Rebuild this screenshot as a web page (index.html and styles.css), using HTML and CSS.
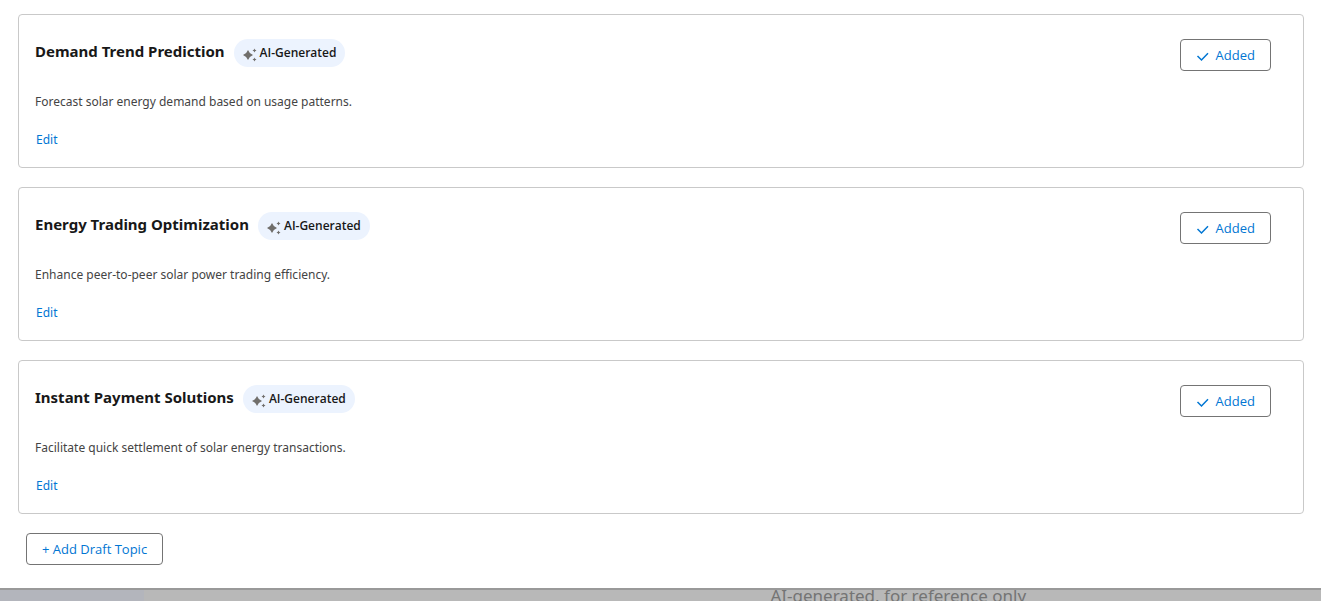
FILE: index.html
```html
<!DOCTYPE html>
<html lang="en">
<head>
    <meta charset="UTF-8">
    <meta name="viewport" content="width=device-width, initial-scale=1.0">
    <title>Draft Topics</title>
    <link rel="stylesheet" href="styles.css">
</head>
<body>
    <!-- shared icons -->
    <svg class="icon-defs" aria-hidden="true">
        <symbol id="sparkle" viewBox="0 0 14 16">
            <path d="M5 3 Q6.3 6.7 10 8 Q6.3 9.3 5 13 Q3.7 9.3 0 8 Q3.7 6.7 5 3Z"/>
            <path d="M11.5 1.5 Q11.8 3.2 13.5 3.5 Q11.8 3.8 11.5 5.5 Q11.2 3.8 9.5 3.5 Q11.2 3.2 11.5 1.5Z"/>
            <path d="M11.5 10.5 Q11.8 12.2 13.5 12.5 Q11.8 12.8 11.5 14.5 Q11.2 12.8 9.5 12.5 Q11.2 12.2 11.5 10.5Z"/>
        </symbol>
        <symbol id="check" viewBox="0 0 14 14">
            <path d="M1.5 7 L5.5 11 L12 4.2" fill="none" stroke="currentColor" stroke-width="1.5"/>
        </symbol>
    </svg>

    <main class="panel">
        <section class="topic-card">
            <div class="topic-header">
                <h3>Demand Trend Prediction</h3>
                <span class="ai-badge"><svg class="sparkle-icon"><use href="#sparkle"/></svg>AI-Generated</span>
                <button type="button" class="btn added-btn"><svg class="check-icon"><use href="#check"/></svg>Added</button>
            </div>
            <p>Forecast solar energy demand based on usage patterns.</p>
            <a href="#" class="edit-link">Edit</a>
        </section>

        <section class="topic-card">
            <div class="topic-header">
                <h3>Energy Trading Optimization</h3>
                <span class="ai-badge"><svg class="sparkle-icon"><use href="#sparkle"/></svg>AI-Generated</span>
                <button type="button" class="btn added-btn"><svg class="check-icon"><use href="#check"/></svg>Added</button>
            </div>
            <p>Enhance peer-to-peer solar power trading efficiency.</p>
            <a href="#" class="edit-link">Edit</a>
        </section>

        <section class="topic-card">
            <div class="topic-header">
                <h3>Instant Payment Solutions</h3>
                <span class="ai-badge"><svg class="sparkle-icon"><use href="#sparkle"/></svg>AI-Generated</span>
                <button type="button" class="btn added-btn"><svg class="check-icon"><use href="#check"/></svg>Added</button>
            </div>
            <p>Facilitate quick settlement of solar energy transactions.</p>
            <a href="#" class="edit-link">Edit</a>
        </section>

        <button type="button" class="btn add-btn">+ Add Draft Topic</button>
    </main>

    <footer>AI-generated, for reference only</footer>
</body>
</html>
```
FILE: styles.css
```css
* {
    box-sizing: border-box;
}
html,
body {
    height: 100%;
}
body {
    display: flex;
    flex-direction: column;
    margin: 0;
    overflow: hidden;
    background-color: #fff;
    color: #181818;
    font-family: "Segoe UI", "Noto Sans", sans-serif;
    font-size: 12px;
    line-height: 18px;
}
.icon-defs {
    display: none;
}
.panel {
    display: flex;
    flex-direction: column;
    flex-shrink: 0;
    gap: 19px;
    padding: 14px 17px 23px 18px;
}
.topic-card {
    padding: 24px 32px 18px 16px;
    border: 1px solid #c9c9c9;
    border-radius: 4px;
}
.topic-header {
    display: flex;
    align-items: flex-start;
    gap: 9px;
}
.topic-header h3 {
    margin: 0;
    font-size: 15px;
    line-height: 24px;
}
.ai-badge {
    display: flex;
    align-items: center;
    gap: 3px;
    height: 28px;
    padding: 0 9px;
    border-radius: 14px;
    background-color: #ecf3fe;
    font-family: "Segoe UI", "Open Sans", sans-serif;
    font-size: 12px;
    font-weight: 600;
}
.sparkle-icon {
    width: 14px;
    height: 16px;
    margin-top: 4px;
    fill: #706e6b;
}
.topic-card p {
    margin: 22px 0 20px;
    color: #444;
}
.edit-link {
    display: block;
    width: max-content;
    margin-left: 1px;
    color: #0176d3;
    text-decoration: none;
}
.btn {
    display: flex;
    align-items: center;
    height: 32px;
    padding: 0 15px;
    border: 1px solid #747474;
    border-radius: 4px;
    background-color: #fff;
    color: #0176d3;
    font-family: "Segoe UI", "Open Sans", sans-serif;
    font-size: 13px;
    cursor: pointer;
}
.added-btn {
    gap: 6px;
    margin-left: auto;
}
.check-icon {
    width: 14px;
    height: 14px;
    margin-top: 2px;
}
.add-btn {
    align-self: flex-start;
    margin-left: 8px;
}
footer {
    flex: 1;
    min-height: 0;
    padding-left: 36%;
    border-top: 2px solid #999;
    background: linear-gradient(to right, #b3b5bc 144px, #b8b8b8 144px);
    color: #747474;
    font-size: 17px;
    line-height: 12px;
    text-align: center;
}
```
